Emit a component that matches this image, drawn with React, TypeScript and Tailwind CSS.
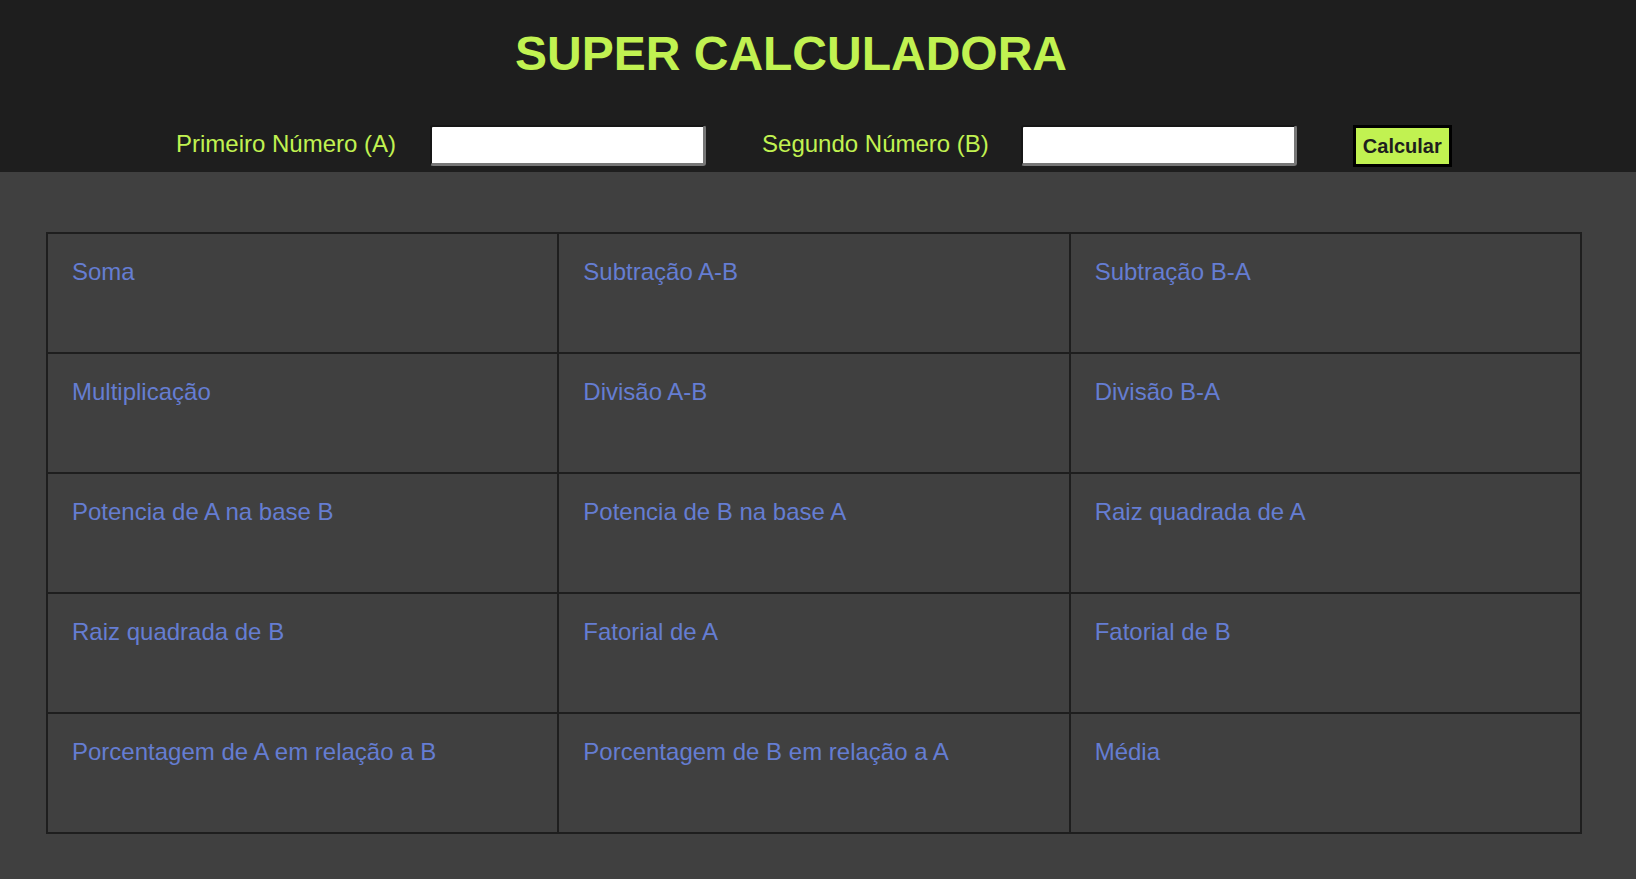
const operacoes = [
  'Soma',
  'Subtração A-B',
  'Subtração B-A',
  'Multiplicação',
  'Divisão A-B',
  'Divisão B-A',
  'Potencia de A na base B',
  'Potencia de B na base A',
  'Raiz quadrada de A',
  'Raiz quadrada de B',
  'Fatorial de A',
  'Fatorial de B',
  'Porcentagem de A em relação a B',
  'Porcentagem de B em relação a A',
  'Média',
];

export default function App() {
  return (
    <div className="min-h-screen bg-[#404040] font-['Liberation_Sans',Arial,sans-serif]">
      {/* Cabeçalho */}
      <header className="h-[172px] bg-[#1e1e1e]">
        <div className="flex justify-center pr-[54px] pt-[26px]">
          <h1 className="text-[48px] font-bold leading-[55px] text-[#c1f251]">SUPER CALCULADORA</h1>
        </div>
        <div className="mt-[43px] flex h-[43px] items-center pl-[176px]">
          <label className="mb-[4px] text-[24px] text-[#c1f251]">Primeiro Número (A)</label>
          <input
            type="number"
            className="ml-[34px] h-[41px] w-[276px] rounded-[3px] border-l-2 border-t-2 border-r-[3px] border-b-[3px] border-l-[#161616] border-t-[#161616] border-r-[#777777] border-b-[#777777] bg-white outline-none"
          />
          <label className="mb-[4px] ml-[56px] text-[24px] text-[#c1f251]">Segundo Número (B)</label>
          <input
            type="number"
            className="ml-[32px] h-[41px] w-[276px] rounded-[3px] border-l-2 border-t-2 border-r-[3px] border-b-[3px] border-l-[#161616] border-t-[#161616] border-r-[#777777] border-b-[#777777] bg-white outline-none"
          />
          <button className="ml-[56px] h-[42px] w-[99px] border-[3px] border-black bg-[#c1f251] text-[20px] font-bold text-[#1e1e1e]">
            Calcular
          </button>
        </div>
      </header>

      {/* Resultados */}
      <div className="ml-[46px] mt-[60px] grid w-[1536px] grid-cols-3 border-l-2 border-t-2 border-[#1e1e1e]">
        {operacoes.map((op) => (
          <div key={op} className="h-[120px] border-b-2 border-r-2 border-[#1e1e1e] px-6 pt-[20px]">
            <span className="text-[24px] text-[#657dd2]">{op}</span>
          </div>
        ))}
      </div>
    </div>
  );
}
